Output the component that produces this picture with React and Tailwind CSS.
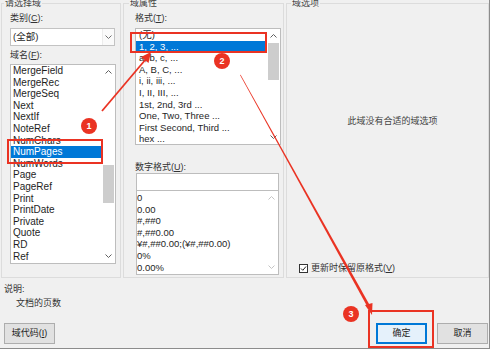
import React from 'react';

const fieldNames = [
  'MergeField', 'MergeRec', 'MergeSeq', 'Next', 'NextIf', 'NoteRef', 'NumChars', 'NumPages',
  'NumWords', 'Page', 'PageRef', 'Print', 'PrintDate', 'Private', 'Quote', 'RD', 'Ref',
];

const formats = [
  '(无)', '1, 2, 3, ...', 'a, b, c, ...', 'A, B, C, ...', 'i, ii, iii, ...', 'I, II, III, ...',
  '1st, 2nd, 3rd ...', 'One, Two, Three ...', 'First Second, Third ...', 'hex ...',
];

const numberFormats = ['0', '0.00', '#,##0', '#,##0.00', '¥#,##0.00;(¥#,##0.00)', '0%', '0.00%'];

const Chevron = ({ dir, color = '#606060' }) => (
  <svg width="7" height="4" viewBox="0 0 7 4">
    <polyline
      points={dir === 'up' ? '0.5,3.5 3.5,0.5 6.5,3.5' : '0.5,0.5 3.5,3.5 6.5,0.5'}
      fill="none"
      stroke={color}
      strokeWidth="1"
    />
  </svg>
);

const ScrollBar = ({ thumbTop, thumbHeight, disabled }) => {
  const color = disabled ? '#c4c4c4' : '#606060';
  return (
    <div className="w-[13px] flex flex-col shrink-0">
      <div className="h-[14px] flex items-center justify-center">
        <Chevron dir="up" color={color} />
      </div>
      <div className="flex-1">
        {!disabled && (
          <div className="mx-[1px] bg-[#cdcdcd]" style={{ marginTop: thumbTop, height: thumbHeight }} />
        )}
      </div>
      <div className="h-[14px] flex items-center justify-center">
        <Chevron dir="down" color={color} />
      </div>
    </div>
  );
};

const Label = ({ text, hot, className = '' }) => (
  <div className={`h-[12px] leading-[12px] text-[9px] text-[#333] whitespace-nowrap ${className}`}>
    {text}(<span className="underline">{hot}</span>):
  </div>
);

export default function App() {
  return (
    <div className="relative w-[500px] h-[350px] bg-white overflow-hidden font-['Liberation_Sans','Noto_Sans_CJK_SC',sans-serif] text-[#1e1e1e]">
      <div className="w-[490px] h-[349px] bg-[#f0f0f0] border-r border-b border-[#8c8c8c] flex flex-col">
        {/* group boxes */}
        <div className="flex -mt-[3px]">
          <fieldset className="ml-[1px] w-[120px] h-[281px] border border-[#dcdcdc]">
            <legend className="ml-[2px] px-[1px] text-[9px] leading-[12px] text-[#444]">请选择域</legend>
            <div className="pl-[8px]">
              <Label text="类别" hot="C" className="mt-[3px]" />
              <div className="mt-[4px] w-[105px] h-[18px] bg-white border border-[#c3c3c3] flex items-center">
                <span className="flex-1 pl-[2px] text-[9.5px]">(全部)</span>
                <div className="w-[12px] h-full flex items-center justify-center border-l border-[#ececec] bg-[#fafafa]">
                  <Chevron dir="down" color="#707070" />
                </div>
              </div>
              <Label text="域名" hot="F" className="mt-[3px]" />
              <div className="mt-[3px] w-[106px] h-[200px] bg-white border border-[#bdbdbd] flex">
                <div className="flex-1 overflow-hidden">
                  {fieldNames.map((n) => (
                    <div
                      key={n}
                      className={`h-[11.6px] leading-[11.6px] text-[10px] pl-[2px] whitespace-nowrap ${n === 'NumPages' ? 'bg-[#0078d7] text-white' : ''}`}
                    >
                      {n}
                    </div>
                  ))}
                </div>
                <ScrollBar thumbTop={86} thumbHeight={38} />
              </div>
            </div>
          </fieldset>

          <fieldset className="ml-[2px] w-[161px] h-[281px] border border-[#dcdcdc]">
            <legend className="ml-[5px] px-[1px] text-[9px] leading-[12px] text-[#444]">域属性</legend>
            <div className="pl-[11px]">
              <Label text="格式" hot="T" className="mt-[3px]" />
              <div className="mt-[4px] w-[146px] h-[117px] bg-white border border-[#bdbdbd] flex">
                <div className="flex-1 overflow-hidden">
                  {formats.map((f, i) => (
                    <div
                      key={f}
                      className={`h-[11.6px] leading-[11.6px] text-[9.5px] pl-[3px] whitespace-nowrap ${i === 1 ? 'bg-[#0078d7] text-white' : ''}`}
                    >
                      {f}
                    </div>
                  ))}
                </div>
                <ScrollBar thumbTop={0} thumbHeight={37} />
              </div>
              <Label text="数字格式" hot="U" className="mt-[16px]" />
              <div className="ml-[1px] w-[143px] h-[18px] bg-white border border-[#bdbdbd]" />
              <div className="ml-[1px] w-[143px] h-[84px] bg-white border border-[#bdbdbd] border-t-0 flex">
                <div className="flex-1 overflow-hidden pt-[1px]">
                  {numberFormats.map((f) => (
                    <div key={f} className="h-[11.6px] leading-[11.6px] text-[9.5px] whitespace-nowrap">
                      {f}
                    </div>
                  ))}
                </div>
                <ScrollBar disabled />
              </div>
            </div>
          </fieldset>

          <fieldset className="ml-[2px] w-[203px] h-[281px] border border-[#dcdcdc]">
            <legend className="ml-[4px] px-[1px] text-[9px] leading-[12px] text-[#444]">域选项</legend>
            <div className="h-[268px] flex flex-col">
              <div className="mt-[106px] pl-[10px] h-[12px] leading-[12px] text-center text-[9px] text-[#444]">
                此域没有合适的域选项
              </div>
              <div className="mt-auto mb-[3px] pl-[12px] h-[12px] flex items-center gap-[3px]">
                <div className="w-[9px] h-[9px] bg-white border border-[#333] flex items-center justify-center">
                  <svg width="7" height="7" viewBox="0 0 7 7">
                    <polyline points="1,3.5 2.8,5.3 6,1.5" fill="none" stroke="#222" strokeWidth="1" />
                  </svg>
                </div>
                <span className="text-[9px] leading-[12px] text-[#333]">
                  更新时保留原格式(<span className="underline">V</span>)
                </span>
              </div>
            </div>
          </fieldset>
        </div>

        {/* description + buttons */}
        <div className="pl-[4px]">
          <div className="mt-[5px] h-[12px] leading-[12px] text-[9px] text-[#333]">说明:</div>
          <div className="mt-[2px] pl-[12px] h-[12px] leading-[12px] text-[9px] text-[#333]">文档的页数</div>
          <div className="mt-[14px] flex items-start">
            <button className="w-[51px] h-[21px] bg-[#e1e1e1] border border-[#adadad] text-[9px] text-[#222]">
              域代码(<span className="underline">I</span>)
            </button>
            <button className="ml-auto w-[51px] h-[21px] bg-[#e5f1fb] border-2 border-[#0078d7] text-[9px] text-[#222]">
              确定
            </button>
            <button className="ml-[10px] mr-[1px] w-[51px] h-[21px] bg-[#e1e1e1] border border-[#adadad] text-[9px] text-[#222]">
              取消
            </button>
          </div>
        </div>
      </div>

      {/* annotations */}
      <div className="absolute inset-0 pointer-events-none">
        <div className="absolute left-[7px] top-[139px] w-[96px] h-[25px] border-2 border-[#ea3323]" />
        <div className="absolute left-[130px] top-[32px] w-[137px] h-[21px] border-2 border-[#ea3323]" />
        <div className="absolute left-[368px] top-[310px] w-[66px] h-[38px] border-2 border-[#ea3323]" />

        <svg className="absolute left-0 top-0" width="500" height="350" viewBox="0 0 500 350">
          <line x1="102" y1="111" x2="146" y2="59" stroke="#ea3323" strokeWidth="1.8" />
          <polygon points="151,52 148.5,63 141,57" fill="#ea3323" />
          <polygon points="240,75 240.6,74.7 370.2,306 367.8,307.4" fill="#ea3323" />
          <polygon points="372,315 365,305 372.5,303" fill="#ea3323" />
        </svg>

        <div className="absolute left-[81px] top-[118px] w-[16px] h-[16px] rounded-full bg-[#ea3323] text-white text-[9px] leading-[16px] text-center font-bold">1</div>
        <div className="absolute left-[214px] top-[53px] w-[16px] h-[16px] rounded-full bg-[#ea3323] text-white text-[9px] leading-[16px] text-center font-bold">2</div>
        <div className="absolute left-[343px] top-[306px] w-[16px] h-[16px] rounded-full bg-[#ea3323] text-white text-[9px] leading-[16px] text-center font-bold">3</div>
      </div>
    </div>
  );
}
